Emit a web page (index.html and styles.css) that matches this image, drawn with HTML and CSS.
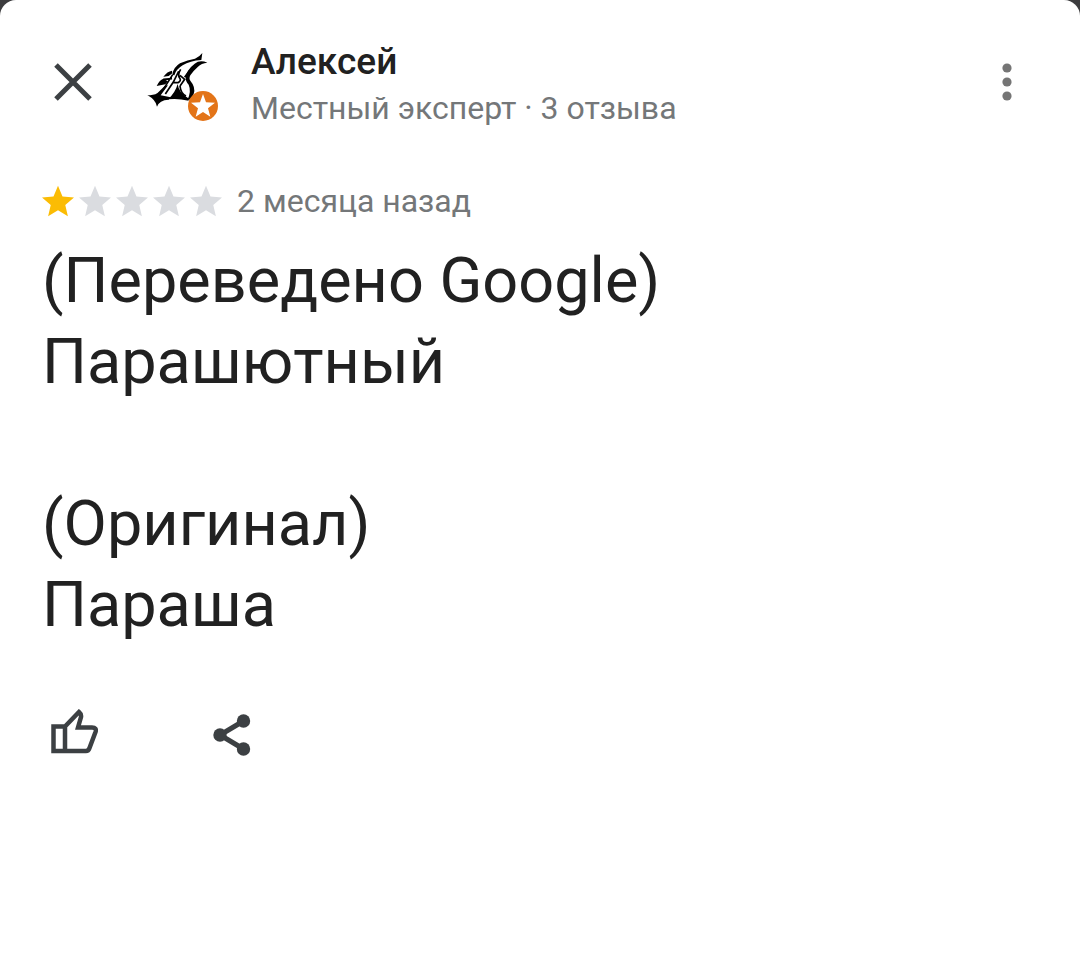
FILE: index.html
```html
<!DOCTYPE html>
<html lang="ru">
  <head>
    <meta charset="UTF-8" />
    <meta name="viewport" content="width=device-width, initial-scale=1.0" />
    <title>Отзыв</title>
    <link rel="stylesheet" href="styles.css">
  </head>
  <body>
    <main class="sheet">
      <header class="header">
        <button class="icon-button" aria-label="Закрыть">
          <svg width="40" height="40" viewBox="0 0 40 40">
            <path d="M3 3L37 37M37 3L3 37" fill="none" stroke="#3c4043" stroke-width="5" />
          </svg>
        </button>
        <svg class="avatar" viewBox="0 0 270 270" aria-hidden="true">
          <path d="M187 39L184 60Q150 62 128 76Q108 88 103 106L97 104Q100 82 120 70Q143 60 165 56Q178 51 187 39Z" />
          <path d="M202 68Q184 70 174 80Q158 94 151 106Q146 116 151 122Q168 142 161 162Q155 180 142 180Q155 154 146 134Q136 124 137 110Q142 88 164 71Q180 58 202 68Z" />
          <path d="M113 132Q116 158 144 174L146 182Q112 174 84 178Q106 158 113 132Z" />
          <path d="M97 100L86 108L70 110Q82 94 96 92ZM84 124L76 133L50 138Q58 120 70 116Z" />
          <path d="M22 165Q46 168 58 154L74 138L84 136L62 166L92 172L86 179Q58 180 51 200Q48 180 22 165Z" />
          <path d="M98 104L70 148M70 118L96 116M116 94L100 126L76 162M120 106L134 118L120 138M122 88Q112 104 119 114Q125 122 114 128L100 128M148 92L134 112" fill="none" stroke="#000" stroke-width="5" />
          <path d="M120 138Q122 160 138 168" fill="none" stroke="#000" stroke-width="5" />
          <circle cx="189" cy="198" r="45" fill="#e37418" />
          <path fill="#fff" d="M189 162L198 187L225 188L204 205L211 230L189 216L167 230L174 205L153 188L180 187Z" />
        </svg>
        <div class="author">
          <h1 class="name">Алексей</h1>
          <p class="level">Местный эксперт · 3 отзыва</p>
        </div>
        <button class="icon-button" aria-label="Ещё">
          <svg width="10" height="40" viewBox="0 0 10 40" fill="#757575">
            <circle cx="5" cy="6" r="4.600" />
            <circle cx="5" cy="20" r="4.600" />
            <circle cx="5" cy="34" r="4.600" />
          </svg>
        </button>
      </header>

      <div class="rating">
        <svg width="0" height="0" class="defs">
          <symbol id="star" viewBox="2 2 20 19">
            <path d="M12 17.270L18.180 21l-1.640-7.030L22 9.240l-7.190-.61L12 2 9.190 8.630 2 9.240l5.460 4.730L5.820 21z" />
          </symbol>
        </svg>
        <div class="stars" role="img" aria-label="Оценка: 1 из 5">
          <svg class="star filled"><use href="#star" /></svg>
          <svg class="star"><use href="#star" /></svg>
          <svg class="star"><use href="#star" /></svg>
          <svg class="star"><use href="#star" /></svg>
          <svg class="star"><use href="#star" /></svg>
        </div>
        <span class="date">2 месяца назад</span>
      </div>

      <p class="review">(Переведено Google)<br>Парашютный<br><br>(Оригинал)<br>Параша</p>

      <div class="actions">
        <button class="icon-button" aria-label="Нравится">
          <svg width="50" height="46" viewBox="-3 0 50 46" fill="none" stroke="#3c4043" stroke-width="4.500" stroke-linejoin="miter">
            <path d="M2.500 17.500H14V42H2.500ZM14 17.500L28 3Q30.500 5 30 8L27 18.500H41Q46 18.500 44.500 23L38.500 39Q37.500 42 35 42H14" />
          </svg>
        </button>
        <button class="icon-button" aria-label="Поделиться">
          <svg width="40" height="48" viewBox="0 -6 40 48" fill="#3c4043">
            <path d="M31.500 7L8 21L31.500 35" fill="none" stroke="#3c4043" stroke-width="5" />
            <circle cx="31.500" cy="7" r="6.700" />
            <circle cx="8" cy="21" r="6.700" />
            <circle cx="31.500" cy="35" r="6.700" />
          </svg>
        </button>
      </div>
    </main>
  </body>
</html>
```
FILE: styles.css
```css
* {
  box-sizing: border-box;
}

body {
  margin: 0;
  background: #3c3c3e;
  font-family: Roboto, "Noto Sans", sans-serif;
}

.sheet {
  min-height: 100vh;
  padding: 40px 42px;
  background: #fff;
  border-radius: 16px 16px 0 0;
}

.header {
  display: flex;
  align-items: flex-start;
}

.icon-button {
  display: flex;
  align-items: center;
  justify-content: center;
  width: 62px;
  height: 84px;
  padding: 0;
  border: none;
  background: none;
  cursor: pointer;
}

.avatar {
  width: 90px;
  height: 90px;
  margin: 0 21px 0 36px;
}

.author {
  flex: 1;
}

.name,
.level {
  margin: 0;
}

.name {
  font-size: 37px;
  font-weight: 500;
  line-height: 44px;
  color: #212121;
}

.level,
.date {
  font-size: 32px;
  line-height: 48px;
  color: #747779;
}

.rating {
  display: flex;
  align-items: center;
  gap: 15px;
  margin-top: 45px;
}

.defs {
  position: absolute;
}

.stars {
  display: flex;
  gap: 5px;
}

.star {
  width: 32px;
  height: 32px;
  fill: #dadce0;
}

.filled {
  fill: #fbbc04;
}

.review {
  margin: 15px 0 45px;
  font-size: 63px;
  line-height: 81px;
  color: #212121;
}

.actions {
  display: flex;
  gap: 97px;
}
```
